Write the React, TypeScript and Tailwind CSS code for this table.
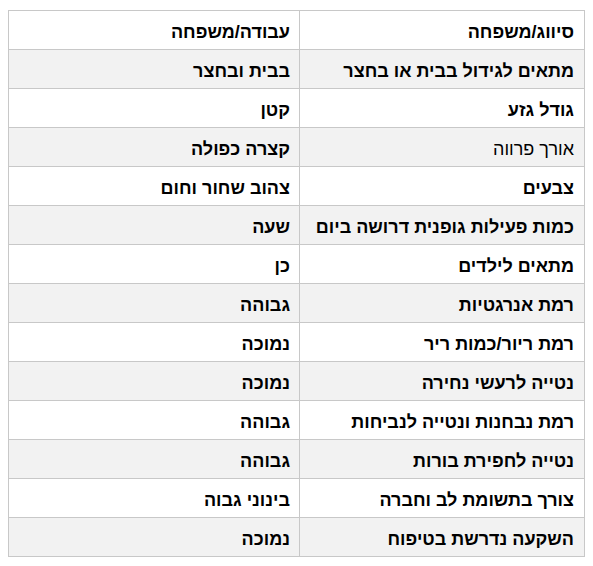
const rows: { label: string; value: string; light?: boolean }[] = [
  { label: "סיווג/משפחה", value: "עבודה/משפחה" },
  { label: "מתאים לגידול בבית או בחצר", value: "בבית ובחצר" },
  { label: "גודל גזע", value: "קטן" },
  { label: "אורך פרווה", value: "קצרה כפולה", light: true },
  { label: "צבעים", value: "צהוב שחור וחום" },
  { label: "כמות פעילות גופנית דרושה ביום", value: "שעה" },
  { label: "מתאים לילדים", value: "כן" },
  { label: "רמת אנרגטיות", value: "גבוהה" },
  { label: "רמת ריור/כמות ריר", value: "נמוכה" },
  { label: "נטייה לרעשי נחירה", value: "נמוכה" },
  { label: "רמת נבחנות ונטייה לנביחות", value: "גבוהה" },
  { label: "נטייה לחפירת בורות", value: "גבוהה" },
  { label: "צורך בתשומת לב וחברה", value: "בינוני גבוה" },
  { label: "השקעה נדרשת בטיפוח", value: "נמוכה" },
];

export default function App() {
  return (
    <div className="w-[593px] h-[566px] bg-white pt-[10px] pl-[8px] font-['Liberation_Sans',Arial,sans-serif] text-[18px] text-black">
      <table dir="rtl" className="w-[576px] border-collapse table-fixed">
        <colgroup>
          <col className="w-[285px]" />
          <col className="w-[291px]" />
        </colgroup>
        <tbody>
          {rows.map((r, i) => (
            <tr key={i} className={i % 2 === 1 ? "bg-[#f2f2f2]" : "bg-white"}>
              <td className={`h-[39px] p-0 border border-[#c8c8c8] pt-[3px] pr-[10px] pl-[6px] text-right align-middle leading-none ${r.light ? "font-normal" : "font-bold"}`}>
                {r.label}
              </td>
              <td className="h-[39px] p-0 border border-[#c8c8c8] pt-[3px] pr-[9px] pl-[6px] text-right align-middle leading-none font-bold">
                {r.value}
              </td>
            </tr>
          ))}
        </tbody>
      </table>
    </div>
  );
}
